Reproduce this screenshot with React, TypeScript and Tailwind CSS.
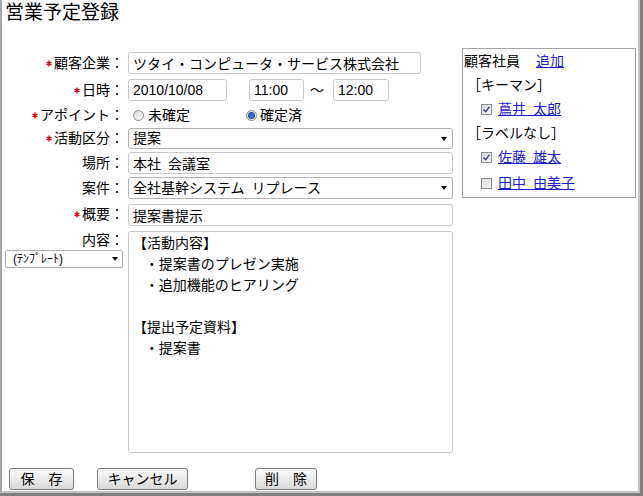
import React from "react";

function Star() {
  return (
    <svg width="6" height="7" viewBox="0 0 6 7" className="mr-[2px] shrink-0">
      <path d="M3 0.5V6.5M0.6 2.1L5.4 4.9M0.6 4.9L5.4 2.1" stroke="#e2001a" strokeWidth="1.4" />
    </svg>
  );
}

function Caret() {
  return (
    <svg width="6" height="4" viewBox="0 0 6 4" className="shrink-0">
      <path d="M0 0H6L3 4Z" fill="#111" />
    </svg>
  );
}

function Label({ req, children }: { req?: boolean; children: React.ReactNode }) {
  return (
    <div className="flex w-[122px] shrink-0 items-center justify-end">
      {req && <Star />}
      <span>{children}</span>
    </div>
  );
}

function Radio({ on }: { on?: boolean }) {
  return (
    <span className="flex h-[11px] w-[11px] items-center justify-center rounded-full border border-[#8f8f8f] bg-linear-to-br from-[#d6d6d6] to-[#fbfbfb]">
      {on && <span className="h-[5px] w-[5px] rounded-full bg-[#2f73cc] ring-1 ring-[#1c4f94]" />}
    </span>
  );
}

function Check({ on }: { on?: boolean }) {
  return (
    <span className="flex h-[11px] w-[11px] shrink-0 items-center justify-center border border-[#8e8e8e] bg-linear-to-br from-[#d9d9d9] to-[#f8f8f8]">
      {on && (
        <svg width="9" height="9" viewBox="0 0 9 9">
          <path d="M1.5 4.5L3.6 6.6L7.6 1.6" stroke="#3b4a86" strokeWidth="1.5" fill="none" />
        </svg>
      )}
    </span>
  );
}

const inputCls =
  "h-[22px] rounded-[3px] border border-[#c9c9c9] bg-white px-[4px] leading-[20px] outline-none";

const memo =
  "【活動内容】\n   ・提案書のプレゼン実施\n   ・追加機能のヒアリング\n\n【提出予定資料】\n   ・提案書";

export default function App() {
  return (
    <div className="h-[496px] w-[643px] border-r-[3px] border-b-[3px] border-[#808080] text-[14px] text-black [font-family:'Liberation_Sans','Noto_Sans_CJK_JP',sans-serif]">
      <div className="flex h-full flex-col border-2 border-t-0 border-l-[#a6a6a6] border-r-[#c4c4c4] border-b-[#c4c4c4] bg-white">
        <div className="h-[48px] pl-[3px] pt-[1px] text-[19px] leading-[24px]">営業予定登録</div>

        <div className="flex">
          <div className="w-[453px] pt-[3px]">
            <div className="flex h-[24px] items-center gap-[4px]">
              <Label req>顧客企業：</Label>
              <input readOnly defaultValue="ツタイ・コンピュータ・サービス株式会社" className={`${inputCls} w-[293px]`} />
            </div>

            <div className="flex h-[30px] items-center gap-[4px]">
              <Label req>日時：</Label>
              <input readOnly defaultValue="2010/10/08" className={`${inputCls} w-[99px]`} />
              <input readOnly defaultValue="11:00" className={`${inputCls} ml-[18px] w-[55px]`} />
              <span className="ml-[2px] w-[14px]">～</span>
              <input readOnly defaultValue="12:00" className={`${inputCls} ml-[5px] w-[56px]`} />
            </div>

            <div className="flex h-[20px] items-center gap-[4px]">
              <Label req>アポイント：</Label>
              <div className="ml-[5px] flex w-[109px] items-center gap-[4px]">
                <Radio />
                <span>未確定</span>
              </div>
              <div className="flex items-center gap-[3px]">
                <Radio on />
                <span>確定済</span>
              </div>
            </div>

            <div className="flex h-[27px] items-center gap-[4px]">
              <Label req>活動区分：</Label>
              <div className="flex h-[21px] w-[325px] items-center justify-between rounded-[3px] border border-[#b3b3b3] bg-white pl-[4px] pr-[5px]">
                <span>提案</span>
                <Caret />
              </div>
            </div>

            <div className="flex h-[22px] items-center gap-[4px]">
              <Label>場所：</Label>
              <input readOnly defaultValue={"本社\u2002会議室"} className={`${inputCls} w-[325px]`} />
            </div>

            <div className="flex h-[28px] items-center gap-[4px]">
              <Label>案件：</Label>
              <div className="flex h-[22px] w-[325px] items-center justify-between rounded-[3px] border border-[#b3b3b3] bg-white pl-[4px] pr-[5px]">
                <span>{"全社基幹システム\u2002リプレース"}</span>
                <Caret />
              </div>
            </div>

            <div className="flex h-[25px] items-center gap-[4px]">
              <Label req>概要：</Label>
              <input readOnly defaultValue="提案書提示" className={`${inputCls} w-[325px]`} />
            </div>

            <div className="flex items-start gap-[4px]">
              <div className="flex w-[122px] shrink-0 flex-col pt-[3px]">
                <div className="self-end leading-[20px]">内容：</div>
                <div className="ml-[3px] flex h-[18px] w-[118px] items-center justify-between rounded-[2px] border border-[#b3b3b3] bg-white pl-[7px] pr-[4px] text-[12px]">
                  <span>(ﾃﾝﾌﾟﾚｰﾄ)</span>
                  <Caret />
                </div>
              </div>
              <textarea
                readOnly
                defaultValue={memo}
                className="mt-[4px] h-[222px] w-[325px] resize-none rounded-[3px] border border-[#c9c9c9] bg-white px-[4px] pt-[1px] leading-[21px] outline-none"
              />
            </div>
          </div>

          <div className="ml-[7px] h-[150px] w-[174px] border border-[#a3a3a3] px-[1px]">
            <div className="flex h-[24px] items-center">
              <span>顧客社員</span>
              <a href="#" className="ml-[16px] text-[#1a1ad6] underline">追加</a>
            </div>
            <div className="flex h-[24px] items-center pl-[3px]">［キーマン］</div>
            <div className="flex h-[25px] items-center gap-[6px] pl-[17px]">
              <Check on />
              <a href="#" className="text-[#1a1ad6] underline">{"蔦井\u2002太郎"}</a>
            </div>
            <div className="flex h-[23px] items-center pl-[3px]">［ラベルなし］</div>
            <div className="flex h-[24px] items-center gap-[6px] pl-[17px]">
              <Check on />
              <a href="#" className="text-[#1a1ad6] underline">{"佐藤\u2002雄太"}</a>
            </div>
            <div className="flex h-[28px] items-center gap-[6px] pl-[17px]">
              <Check />
              <a href="#" className="text-[#1a1ad6] underline">{"田中\u2002由美子"}</a>
            </div>
          </div>
        </div>

        <div className="mt-[15px] flex pl-[7px]">
          <button className="h-[22px] w-[65px] rounded-[3px] border border-[#7d7d7d] bg-linear-to-b from-[#fbfbfb] to-[#d9d9d9] leading-none">
            保　存
          </button>
          <button className="ml-[23px] h-[22px] w-[91px] rounded-[3px] border border-[#7d7d7d] bg-linear-to-b from-[#fbfbfb] to-[#d9d9d9] leading-none">
            キャンセル
          </button>
          <button className="ml-[67px] h-[22px] w-[62px] rounded-[3px] border border-[#7d7d7d] bg-linear-to-b from-[#fbfbfb] to-[#d9d9d9] leading-none">
            削　除
          </button>
        </div>
      </div>
    </div>
  );
}
